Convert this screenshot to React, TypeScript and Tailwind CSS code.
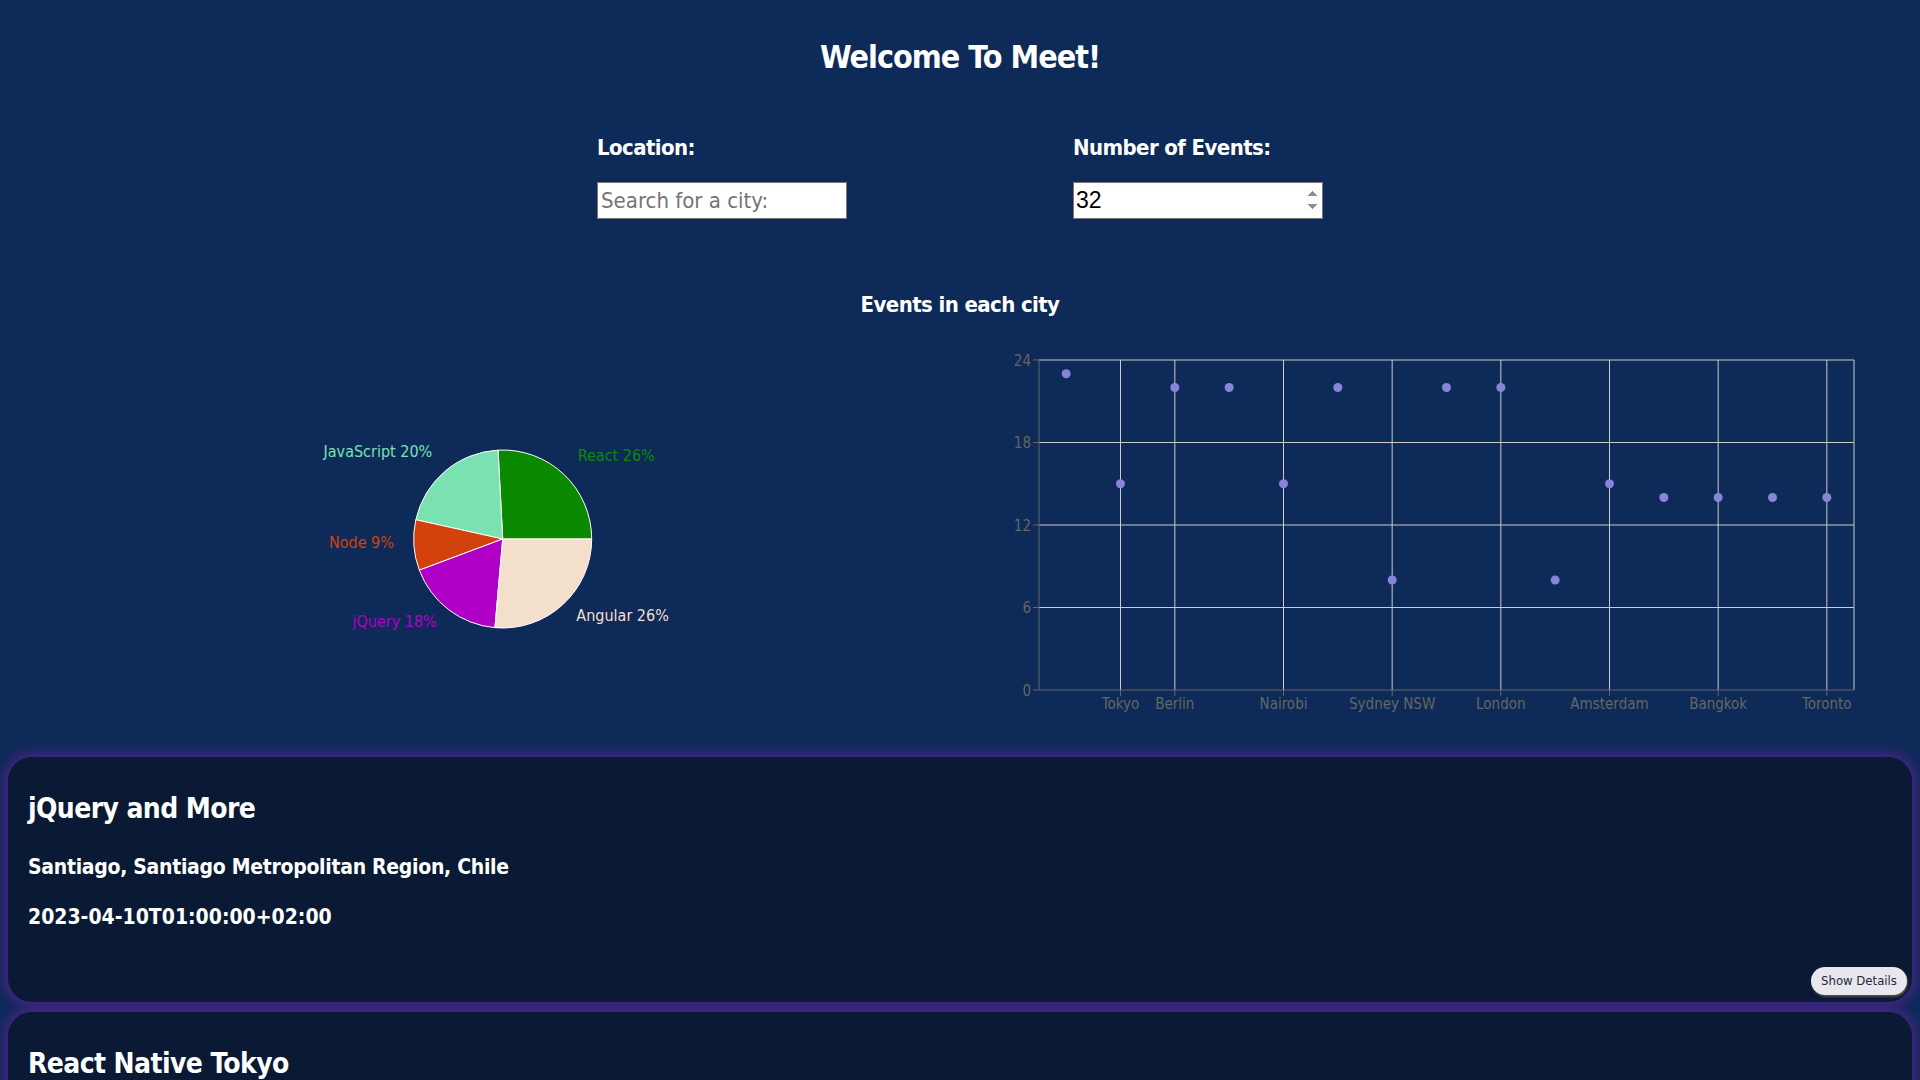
import React from "react";

type Slice = { name: string; pct: number; from: number; to: number; color: string };

const slices: Slice[] = [
  { name: "React", pct: 26, from: 0, to: 93, color: "#0b8a00" },
  { name: "JavaScript", pct: 20, from: 93, to: 167.5, color: "#79e2b0" },
  { name: "Node", pct: 9, from: 167.5, to: 200.5, color: "#d3410c" },
  { name: "jQuery", pct: 18, from: 200.5, to: 265, color: "#b000c8" },
  { name: "Angular", pct: 26, from: 265, to: 360, color: "#f3dfcc" },
];

const cityCounts = [
  { city: "Santiago", count: 23, tick: false },
  { city: "Tokyo", count: 15, tick: true },
  { city: "Berlin", count: 22, tick: true },
  { city: "Moscow", count: 22, tick: false },
  { city: "Nairobi", count: 15, tick: true },
  { city: "Dubai", count: 22, tick: false },
  { city: "Sydney NSW", count: 8, tick: true },
  { city: "Munich", count: 22, tick: false },
  { city: "London", count: 22, tick: true },
  { city: "Toulouse", count: 8, tick: false },
  { city: "Amsterdam", count: 15, tick: true },
  { city: "Cape Town", count: 14, tick: false },
  { city: "Bangkok", count: 14, tick: true },
  { city: "Seoul", count: 14, tick: false },
  { city: "Toronto", count: 14, tick: true },
];

const events = [
  {
    summary: "jQuery and More",
    location: "Santiago, Santiago Metropolitan Region, Chile",
    start: "2023-04-10T01:00:00+02:00",
  },
  {
    summary: "React Native Tokyo",
    location: "Tokyo, Japan",
    start: "2023-04-11T03:00:00+02:00",
  },
];

const rad = (d: number) => (d * Math.PI) / 180;

function polar(cx: number, cy: number, r: number, deg: number) {
  return [cx + r * Math.cos(rad(deg)), cy - r * Math.sin(rad(deg))];
}

function slicePath(cx: number, cy: number, r: number, from: number, to: number) {
  const [x0, y0] = polar(cx, cy, r, from);
  const [x1, y1] = polar(cx, cy, r, to);
  const large = to - from > 180 ? 1 : 0;
  return `M${cx},${cy} L${x0},${y0} A${r},${r} 0 ${large} 0 ${x1},${y1} Z`;
}

function EventGenresChart() {
  const cx = 502.7;
  const cy = 199;
  const r = 89;
  return (
    <svg width={960} height={400} className="block">
      {slices.map((s) => (
        <path key={s.name} d={slicePath(cx, cy, r, s.from, s.to)} fill={s.color} stroke="#fff" strokeWidth={1} />
      ))}
      {slices.map((s) => {
        const mid = (s.from + s.to) / 2;
        const [x, y] = polar(cx, cy, r + 20, mid);
        return (
          <text
            key={s.name}
            x={x}
            y={y - 4}
            fill={s.color}
            fontSize={16}
            textAnchor={x > cx ? "start" : "end"}
            dominantBaseline="central"
          >
            {`${s.name} ${s.pct}%`}
          </text>
        );
      })}
    </svg>
  );
}

function CityEventsChart() {
  const left = 79;
  const right = 894;
  const top = 20;
  const bottom = 350;
  const band = (right - left) / cityCounts.length;
  const yOf = (v: number) => bottom - (v / 24) * (bottom - top);
  const xOf = (i: number) => left + (i + 0.5) * band;

  return (
    <svg width={960} height={400} className="block">
      {/* grid */}
      {[6, 12, 18, 24].map((v) => (
        <line key={v} x1={left} x2={right} y1={yOf(v)} y2={yOf(v)} stroke="#ccc" />
      ))}
      {cityCounts.map((c, i) =>
        c.tick ? <line key={c.city} x1={xOf(i)} x2={xOf(i)} y1={top} y2={bottom} stroke="#ccc" /> : null
      )}
      <line x1={right} x2={right} y1={top} y2={bottom} stroke="#ccc" />

      {/* axes */}
      <line x1={left} x2={left} y1={top} y2={bottom} stroke="#666" />
      <line x1={left} x2={right} y1={bottom} y2={bottom} stroke="#666" />
      {[0, 6, 12, 18, 24].map((v) => (
        <g key={v}>
          <line x1={left - 6} x2={left} y1={yOf(v)} y2={yOf(v)} stroke="#666" />
          <text x={left - 8} y={yOf(v) + 5.5} fill="#666" fontSize={15} textAnchor="end">
            {v}
          </text>
        </g>
      ))}
      {cityCounts.map((c, i) =>
        c.tick ? (
          <g key={c.city}>
            <line x1={xOf(i)} x2={xOf(i)} y1={bottom} y2={bottom + 6} stroke="#666" />
            <text x={xOf(i)} y={369} fill="#666" fontSize={15} textAnchor="middle">
              {c.city}
            </text>
          </g>
        ) : null
      )}

      {/* points */}
      {cityCounts.map((c, i) => (
        <circle key={c.city} cx={xOf(i)} cy={yOf(c.count)} r={4.5} fill="#8884d8" />
      ))}
    </svg>
  );
}

function EventCard({ summary, location, start }: { summary: string; location: string; start: string }) {
  return (
    <div className="flex h-[245px] shrink-0 flex-col rounded-3xl bg-[#0a1934] pt-[35px] pr-[5px] pb-[7px] pl-5 shadow-[0_0_12px_4px_#4a2585]">
      <h2 className="text-[28px] leading-[34px] font-bold tracking-[-0.6px]">{summary}</h2>
      <p className="mt-[28px] text-[21px] leading-[26px] font-bold tracking-[-0.3px]">{location}</p>
      <p className="mt-[24px] text-[21px] leading-[26px] font-bold">{start}</p>
      <div className="mt-auto flex justify-end">
        <button className="h-[28px] w-[96px] rounded-full bg-[#e8e7ed] text-[13px] text-[#1c2840] shadow-[1px_2px_2px_#4d4d4d]">
          Show Details
        </button>
      </div>
    </div>
  );
}

export default function App() {
  return (
    <div className="h-screen overflow-hidden bg-[#0e2a58] font-[family-name:'DejaVu_Sans_Condensed','Liberation_Sans',sans-serif] text-white">
      <h1 className="pt-[37px] text-center text-[32px] leading-[40px] font-bold tracking-[-1px]">Welcome To Meet!</h1>

      <div className="mt-[56px] flex justify-center gap-[226px]">
        <div className="w-[250px]">
          <label className="block text-[22px] leading-[30px] font-bold tracking-[-0.6px]">Location:</label>
          <input
            type="text"
            placeholder="Search for a city:"
            className="mt-[19px] block h-[37px] w-[250px] border border-[#767676] bg-white px-[3px] text-[22px] text-black placeholder:text-[#757575]"
          />
        </div>
        <div className="w-[250px]">
          <label className="block text-[22px] leading-[30px] font-bold tracking-[-0.6px]">Number of Events:</label>
          <input
            type="number"
            defaultValue={32}
            className="mt-[19px] block h-[37px] w-[250px] border border-[#767676] bg-white px-[2px] font-[family-name:'Liberation_Sans',sans-serif] text-[23px] text-black [&::-webkit-inner-spin-button]:opacity-100"
          />
        </div>
      </div>

      <h3 className="mt-[71px] text-center text-[22px] leading-[30px] font-bold tracking-[-0.6px]">Events in each city</h3>

      <div className="mt-[20px] grid h-[400px] grid-cols-2">
        <EventGenresChart />
        <CityEventsChart />
      </div>

      <div className="flex flex-col gap-[10px] px-2 pt-[17px]">
        {events.map((e) => (
          <EventCard key={e.summary} {...e} />
        ))}
      </div>
    </div>
  );
}
